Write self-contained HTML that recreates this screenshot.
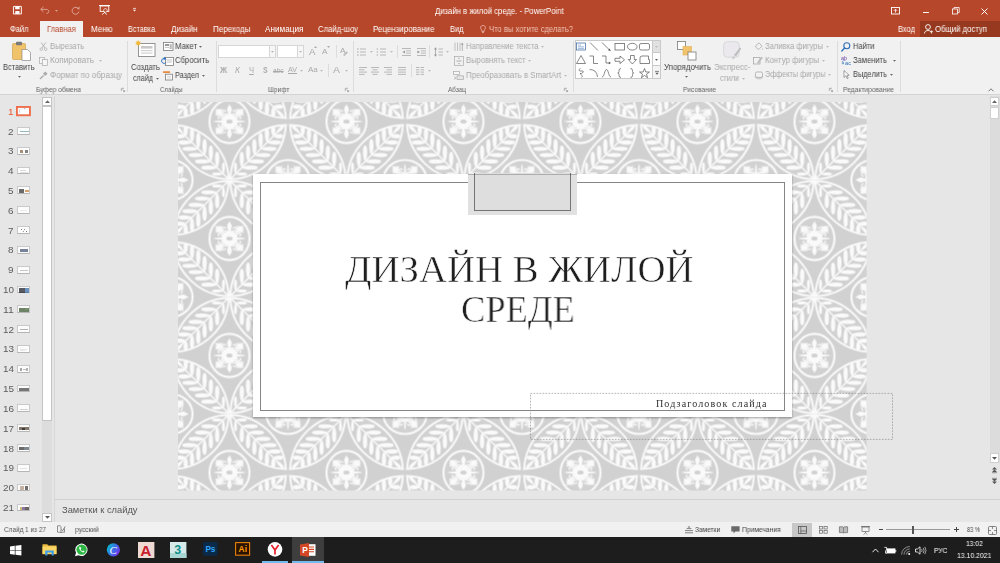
<!DOCTYPE html>
<html lang="ru"><head><meta charset="utf-8"><title>Дизайн в жилой среде. - PowerPoint</title>
<style>
html,body{margin:0;padding:0;}
body{width:1000px;height:563px;overflow:hidden;position:relative;background:#e6e6e6;font-family:"Liberation Sans",sans-serif;}
.a{position:absolute;box-sizing:border-box;}
.t{position:absolute;white-space:nowrap;transform-origin:0 50%;display:block;will-change:transform;}
svg{position:absolute;overflow:visible;}
</style></head>
<body>
<div class="a" style="left:0px;top:0px;width:1000px;height:37px;background:#b7472a;"></div>
<div class="a" style="left:0px;top:37px;width:1000px;height:58px;background:#f1f1f1;border-bottom:1px solid #d4d4d4;"></div>
<div class="a" style="left:40px;top:21px;width:43px;height:17px;background:#f1f1f1;"></div>
<div class="a" style="left:920px;top:21px;width:80px;height:16px;background:#96391f;"></div>
<svg style="left:178px;top:102px;overflow:hidden" width="688.6" height="388.5" viewBox="0 0 688.6 388.5"><defs><g id="lens"><path d="M0.908,-0.907 A56.50,57.60 0 0 0 56.402,-55.113 A57.60,55.15 0 0 0 0.908,-0.907Z" fill="none" stroke="#fafafa" stroke-width="2.0" stroke-linejoin="miter"/><g transform="rotate(-45)"><path d="M1.5,0 L68.7,0" stroke="#fafafa" stroke-width="1.5" fill="none"/>
<path d="M0,0 C1.05,-0.94 2.94,-1.70 6.51,-1.70 C9.24,-1.70 10.50,-1.05 10.50,0 C10.50,1.05 9.24,1.70 6.51,1.70 C2.94,1.70 1.05,0.94 0,0Z" transform="translate(66.13,0)" fill="#fafafa"/>
<path d="M0,0 C1.15,-0.83 3.21,-1.50 7.11,-1.50 C10.10,-1.50 11.47,-0.93 11.47,0 C11.47,0.93 10.10,1.50 7.11,1.50 C3.21,1.50 1.15,0.83 0,0Z" transform="translate(8.50,0) rotate(45)" fill="#fafafa"/>
<path d="M0,0 C1.15,-0.83 3.21,-1.50 7.11,-1.50 C10.10,-1.50 11.47,-0.93 11.47,0 C11.47,0.93 10.10,1.50 7.11,1.50 C3.21,1.50 1.15,0.83 0,0Z" transform="translate(8.50,0) rotate(-45)" fill="#fafafa"/>
<path d="M0,0 C1.60,-1.18 4.48,-2.15 9.92,-2.15 C14.08,-2.15 16.00,-1.33 16.00,0 C16.00,1.33 14.08,2.15 9.92,2.15 C4.48,2.15 1.60,1.18 0,0Z" transform="translate(17.40,0) rotate(45)" fill="#fafafa"/>
<path d="M0,0 C1.60,-1.18 4.48,-2.15 9.92,-2.15 C14.08,-2.15 16.00,-1.33 16.00,0 C16.00,1.33 14.08,2.15 9.92,2.15 C4.48,2.15 1.60,1.18 0,0Z" transform="translate(17.40,0) rotate(-45)" fill="#fafafa"/>
<path d="M0,0 C1.60,-1.18 4.48,-2.15 9.92,-2.15 C14.08,-2.15 16.00,-1.33 16.00,0 C16.00,1.33 14.08,2.15 9.92,2.15 C4.48,2.15 1.60,1.18 0,0Z" transform="translate(26.30,0) rotate(45)" fill="#fafafa"/>
<path d="M0,0 C1.60,-1.18 4.48,-2.15 9.92,-2.15 C14.08,-2.15 16.00,-1.33 16.00,0 C16.00,1.33 14.08,2.15 9.92,2.15 C4.48,2.15 1.60,1.18 0,0Z" transform="translate(26.30,0) rotate(-45)" fill="#fafafa"/>
<path d="M0,0 C1.60,-1.18 4.48,-2.15 9.92,-2.15 C14.08,-2.15 16.00,-1.33 16.00,0 C16.00,1.33 14.08,2.15 9.92,2.15 C4.48,2.15 1.60,1.18 0,0Z" transform="translate(35.20,0) rotate(45)" fill="#fafafa"/>
<path d="M0,0 C1.60,-1.18 4.48,-2.15 9.92,-2.15 C14.08,-2.15 16.00,-1.33 16.00,0 C16.00,1.33 14.08,2.15 9.92,2.15 C4.48,2.15 1.60,1.18 0,0Z" transform="translate(35.20,0) rotate(-45)" fill="#fafafa"/>
<path d="M0,0 C1.60,-1.18 4.48,-2.15 9.92,-2.15 C14.08,-2.15 16.00,-1.33 16.00,0 C16.00,1.33 14.08,2.15 9.92,2.15 C4.48,2.15 1.60,1.18 0,0Z" transform="translate(44.10,0) rotate(45)" fill="#fafafa"/>
<path d="M0,0 C1.60,-1.18 4.48,-2.15 9.92,-2.15 C14.08,-2.15 16.00,-1.33 16.00,0 C16.00,1.33 14.08,2.15 9.92,2.15 C4.48,2.15 1.60,1.18 0,0Z" transform="translate(44.10,0) rotate(-45)" fill="#fafafa"/>
<path d="M0,0 C1.40,-1.18 3.92,-2.15 8.68,-2.15 C12.32,-2.15 14.00,-1.33 14.00,0 C14.00,1.33 12.32,2.15 8.68,2.15 C3.92,2.15 1.40,1.18 0,0Z" transform="translate(53.00,0) rotate(45)" fill="#fafafa"/>
<path d="M0,0 C1.40,-1.18 3.92,-2.15 8.68,-2.15 C12.32,-2.15 14.00,-1.33 14.00,0 C14.00,1.33 12.32,2.15 8.68,2.15 C3.92,2.15 1.40,1.18 0,0Z" transform="translate(53.00,0) rotate(-45)" fill="#fafafa"/>
<path d="M0,0 C1.00,-1.18 2.80,-2.15 6.20,-2.15 C8.80,-2.15 10.00,-1.33 10.00,0 C10.00,1.33 8.80,2.15 6.20,2.15 C2.80,2.15 1.00,1.18 0,0Z" transform="translate(61.90,0) rotate(45)" fill="#fafafa"/>
<path d="M0,0 C1.00,-1.18 2.80,-2.15 6.20,-2.15 C8.80,-2.15 10.00,-1.33 10.00,0 C10.00,1.33 8.80,2.15 6.20,2.15 C2.80,2.15 1.00,1.18 0,0Z" transform="translate(61.90,0) rotate(-45)" fill="#fafafa"/></g></g><g id="med"><ellipse rx="20" ry="21.6" fill="none" stroke="#fafafa" stroke-width="2.1"/>
<path d="M-3,-7 L3,-7 L7,-3 L7,3 L3,7 L-3,7 L-7,3 L-7,-3Z" fill="#fafafa" stroke="#fafafa" stroke-width="0.8" stroke-linejoin="round"/>
<g transform="rotate(0)"><path d="M0,-17.6 C0.7,-15.4 2.4,-14 2.4,-12.4 C2.4,-10.6 1.2,-9.6 1.3,-6 L-1.3,-6 C-1.2,-9.6 -2.4,-10.6 -2.4,-12.4 C-2.4,-14 -0.7,-15.4 0,-17.6Z" fill="#fafafa"/><path d="M-2,-7 C-3.5,-7.2 -7.2,-7 -7,-9.6 C-6.8,-11.6 -4.2,-11.8 -3.7,-9.9 M2,-7 C3.5,-7.2 7.2,-7 7,-9.6 C6.8,-11.6 4.2,-11.8 3.7,-9.9" fill="none" stroke="#fafafa" stroke-width="1.25" stroke-linecap="round"/></g>
<g transform="rotate(180)"><path d="M0,-17.6 C0.7,-15.4 2.4,-14 2.4,-12.4 C2.4,-10.6 1.2,-9.6 1.3,-6 L-1.3,-6 C-1.2,-9.6 -2.4,-10.6 -2.4,-12.4 C-2.4,-14 -0.7,-15.4 0,-17.6Z" fill="#fafafa"/><path d="M-2,-7 C-3.5,-7.2 -7.2,-7 -7,-9.6 C-6.8,-11.6 -4.2,-11.8 -3.7,-9.9 M2,-7 C3.5,-7.2 7.2,-7 7,-9.6 C6.8,-11.6 4.2,-11.8 3.7,-9.9" fill="none" stroke="#fafafa" stroke-width="1.25" stroke-linecap="round"/></g>
<g transform="rotate(90)"><path d="M0,-16.6 L0.8,-13 L1.2,-6 L-1.2,-6 L-0.8,-13Z" fill="#fafafa"/><path d="M-1.6,-7 C-3,-7.4 -5.6,-7.6 -5.4,-10 C-5.2,-11.8 -3,-11.8 -2.7,-10.2 M1.6,-7 C3,-7.4 5.6,-7.6 5.4,-10 C5.2,-11.8 3,-11.8 2.7,-10.2" fill="none" stroke="#fafafa" stroke-width="1.2" stroke-linecap="round"/></g>
<g transform="rotate(270)"><path d="M0,-16.6 L0.8,-13 L1.2,-6 L-1.2,-6 L-0.8,-13Z" fill="#fafafa"/><path d="M-1.6,-7 C-3,-7.4 -5.6,-7.6 -5.4,-10 C-5.2,-11.8 -3,-11.8 -2.7,-10.2 M1.6,-7 C3,-7.4 5.6,-7.6 5.4,-10 C5.2,-11.8 3,-11.8 2.7,-10.2" fill="none" stroke="#fafafa" stroke-width="1.2" stroke-linecap="round"/></g>
<path d="M-5,-4.6 L-9,-8" stroke="#fafafa" stroke-width="2"/>
<path transform="translate(-10.5,-9.2)" d="M-3.2,-3.2 L-1.2,-2.5 L0,-3.3 L1.2,-2.5 L3.2,-3.2 L2.5,-1.2 L3.3,0 L2.5,1.2 L3.2,3.2 L1.2,2.5 L0,3.3 L-1.2,2.5 L-3.2,3.2 L-2.5,1.2 L-3.3,0 L-2.5,-1.2 Z" fill="#fafafa" stroke="#fafafa" stroke-width="0.6" stroke-linejoin="round"/>
<path d="M-5,4.6 L-9,8" stroke="#fafafa" stroke-width="2"/>
<path transform="translate(-10.5,9.2)" d="M-3.2,-3.2 L-1.2,-2.5 L0,-3.3 L1.2,-2.5 L3.2,-3.2 L2.5,-1.2 L3.3,0 L2.5,1.2 L3.2,3.2 L1.2,2.5 L0,3.3 L-1.2,2.5 L-3.2,3.2 L-2.5,1.2 L-3.3,0 L-2.5,-1.2 Z" fill="#fafafa" stroke="#fafafa" stroke-width="0.6" stroke-linejoin="round"/>
<path d="M5,-4.6 L9,-8" stroke="#fafafa" stroke-width="2"/>
<path transform="translate(10.5,-9.2)" d="M-3.2,-3.2 L-1.2,-2.5 L0,-3.3 L1.2,-2.5 L3.2,-3.2 L2.5,-1.2 L3.3,0 L2.5,1.2 L3.2,3.2 L1.2,2.5 L0,3.3 L-1.2,2.5 L-3.2,3.2 L-2.5,1.2 L-3.3,0 L-2.5,-1.2 Z" fill="#fafafa" stroke="#fafafa" stroke-width="0.6" stroke-linejoin="round"/>
<path d="M5,4.6 L9,8" stroke="#fafafa" stroke-width="2"/>
<path transform="translate(10.5,9.2)" d="M-3.2,-3.2 L-1.2,-2.5 L0,-3.3 L1.2,-2.5 L3.2,-3.2 L2.5,-1.2 L3.3,0 L2.5,1.2 L3.2,3.2 L1.2,2.5 L0,3.3 L-1.2,2.5 L-3.2,3.2 L-2.5,1.2 L-3.3,0 L-2.5,-1.2 Z" fill="#fafafa" stroke="#fafafa" stroke-width="0.6" stroke-linejoin="round"/>
<ellipse rx="3.1" ry="2.1" fill="#d1d1d1"/></g>
<pattern id="pat" x="51.5" y="19.5" width="117.0" height="117.0" patternUnits="userSpaceOnUse">
<rect width="117.0" height="117.0" fill="#d1d1d1"/>
<use href="#med" transform="translate(0,0)"/>
<use href="#med" transform="translate(117.0,0)"/>
<use href="#med" transform="translate(0,117.0)"/>
<use href="#med" transform="translate(117.0,117.0)"/>
<use href="#med" transform="translate(58.5,58.5) rotate(90)"/>
<use href="#lens" transform="translate(0,58.5) scale(1,1)"/>
<use href="#lens" transform="translate(0,58.5) scale(-1,1)"/>
<use href="#lens" transform="translate(0,58.5) scale(1,-1)"/>
<use href="#lens" transform="translate(0,58.5) scale(-1,-1)"/>
<use href="#lens" transform="translate(117.0,58.5) scale(1,1)"/>
<use href="#lens" transform="translate(117.0,58.5) scale(-1,1)"/>
<use href="#lens" transform="translate(117.0,58.5) scale(1,-1)"/>
<use href="#lens" transform="translate(117.0,58.5) scale(-1,-1)"/>
<use href="#lens" transform="translate(0,-58.5) scale(1,1)"/>
<use href="#lens" transform="translate(0,-58.5) scale(-1,1)"/>
<use href="#lens" transform="translate(0,-58.5) scale(1,-1)"/>
<use href="#lens" transform="translate(0,-58.5) scale(-1,-1)"/>
<use href="#lens" transform="translate(117.0,-58.5) scale(1,1)"/>
<use href="#lens" transform="translate(117.0,-58.5) scale(-1,1)"/>
<use href="#lens" transform="translate(117.0,-58.5) scale(1,-1)"/>
<use href="#lens" transform="translate(117.0,-58.5) scale(-1,-1)"/>
<use href="#lens" transform="translate(0,175.5) scale(1,1)"/>
<use href="#lens" transform="translate(0,175.5) scale(-1,1)"/>
<use href="#lens" transform="translate(0,175.5) scale(1,-1)"/>
<use href="#lens" transform="translate(0,175.5) scale(-1,-1)"/>
<use href="#lens" transform="translate(117.0,175.5) scale(1,1)"/>
<use href="#lens" transform="translate(117.0,175.5) scale(-1,1)"/>
<use href="#lens" transform="translate(117.0,175.5) scale(1,-1)"/>
<use href="#lens" transform="translate(117.0,175.5) scale(-1,-1)"/>
</pattern></defs><rect width="688.6" height="388.5" fill="url(#pat)"/></svg>
<div class="a" style="left:253px;top:174px;width:539px;height:243px;background:#fff;box-shadow:0 0.5px 2px rgba(0,0,0,0.35);"></div>
<div class="a" style="left:260px;top:182px;width:525px;height:229px;border:1px solid #858585;"></div>
<div class="a" style="left:468px;top:174px;width:109px;height:41px;background:#e1e1e1;"></div>
<div class="a" style="left:474px;top:173px;width:97px;height:38px;background:#dedede;border:1px solid #757575;border-top:none;"></div>
<div class="a" style="left:468px;top:174px;width:109px;height:1px;background:rgba(0,0,0,0.22);"></div>
<svg style="left:530px;top:393px" width="363" height="47" viewBox="0 0 363 47"><rect x="0.5" y="0.4" width="362" height="46" fill="none" stroke="#858585" stroke-width="0.6" stroke-dasharray="1.7 1.3"/></svg>
<div class="a" style="left:54px;top:96px;width:1px;height:425.5px;background:#d6d6d6;"></div>
<div class="a" style="left:42.3px;top:97px;width:9.6px;height:9.3px;background:#fff;border:0.8px solid #c4c4c4;"></div>
<div class="a" style="left:42.3px;top:106.3px;width:9.4px;height:314.6px;background:#fff;border:0.8px solid #c4c4c4;"></div>
<div class="a" style="left:42.3px;top:420.9px;width:9.4px;height:91.8px;background:#dddddd;"></div>
<div class="a" style="left:42.3px;top:512.5px;width:9.6px;height:9px;background:#fff;border:0.8px solid #c4c4c4;"></div>
<svg style="left:16px;top:106.00px" width="14.9" height="10.2" viewBox="0 0 14.9 10.2"><rect x="0.95" y="0.95" width="13" height="8.3" fill="#fff" stroke="#ef6f4c" stroke-width="1.9"/><path d="M3.6,3.2 V6.8" stroke="#b5b5b5" stroke-width="0.6"/><path d="M4.2,2.9 H10.5" stroke="#d8d8d8" stroke-width="0.5"/><rect x="8" y="2.4" width="1.2" height="0.7" fill="#999"/></svg>
<div class="a" style="left:17.3px;top:127.01499999999999px;width:12.3px;height:7.8px;background:#fcfcfc;border:0.7px solid #c9c9c9;border-bottom-color:#b5b5b5;"><div class="a" style="left:1.5px;top:3px;width:9px;height:0.9px;background:#6fa3a8;opacity:0.75"></div></div>
<div class="a" style="left:17.3px;top:146.82999999999998px;width:12.3px;height:7.8px;background:#fcfcfc;border:0.7px solid #c9c9c9;border-bottom-color:#b5b5b5;"><div class="a" style="left:2.2px;top:2.2px;width:3px;height:3.2px;background:#8a6a4a;opacity:0.75"></div><div class="a" style="left:6.6px;top:2.2px;width:3.2px;height:3.2px;background:#5a5a5a;opacity:0.75"></div></div>
<div class="a" style="left:17.3px;top:166.645px;width:12.3px;height:7.8px;background:#fcfcfc;border:0.7px solid #c9c9c9;border-bottom-color:#b5b5b5;"><div class="a" style="left:1.5px;top:2.2px;width:6px;height:0.6px;background:#cfcfcf;opacity:0.75"></div><div class="a" style="left:1.5px;top:4px;width:8px;height:0.6px;background:#d8d8d8;opacity:0.75"></div></div>
<div class="a" style="left:17.3px;top:186.46px;width:12.3px;height:7.8px;background:#fcfcfc;border:0.7px solid #c9c9c9;border-bottom-color:#b5b5b5;"><div class="a" style="left:1.2px;top:2px;width:5px;height:3.2px;background:#3a3a3a;opacity:0.75"></div><div class="a" style="left:6.4px;top:2.4px;width:4.2px;height:2.6px;background:#c9853a;opacity:0.75"></div></div>
<div class="a" style="left:17.3px;top:206.275px;width:12.3px;height:7.8px;background:#fcfcfc;border:0.7px solid #c9c9c9;border-bottom-color:#b5b5b5;"><div class="a" style="left:2px;top:3px;width:7px;height:0.6px;background:#e4e4e4;opacity:0.75"></div></div>
<div class="a" style="left:17.3px;top:226.09px;width:12.3px;height:7.8px;background:#fcfcfc;border:0.7px solid #c9c9c9;border-bottom-color:#b5b5b5;"><div class="a" style="left:3px;top:2px;width:1px;height:1px;background:#555;opacity:0.75"></div><div class="a" style="left:6px;top:2.4px;width:1px;height:1px;background:#666;opacity:0.75"></div><div class="a" style="left:7.6px;top:4px;width:1px;height:1px;background:#555;opacity:0.75"></div><div class="a" style="left:4.5px;top:4.4px;width:1px;height:1px;background:#777;opacity:0.75"></div></div>
<div class="a" style="left:17.3px;top:245.905px;width:12.3px;height:7.8px;background:#fcfcfc;border:0.7px solid #c9c9c9;border-bottom-color:#b5b5b5;"><div class="a" style="left:1.5px;top:2.6px;width:8.6px;height:2.4px;background:#4a5a7a;opacity:0.75"></div></div>
<div class="a" style="left:17.3px;top:265.72px;width:12.3px;height:7.8px;background:#fcfcfc;border:0.7px solid #c9c9c9;border-bottom-color:#b5b5b5;"><div class="a" style="left:2px;top:3.2px;width:8px;height:0.7px;background:#b5b5b5;opacity:0.75"></div></div>
<div class="a" style="left:17.3px;top:285.535px;width:12.3px;height:7.8px;background:#fcfcfc;border:0.7px solid #c9c9c9;border-bottom-color:#b5b5b5;"><div class="a" style="left:1px;top:1.4px;width:5.4px;height:4.6px;background:#20242c;opacity:0.75"></div><div class="a" style="left:6.4px;top:1.4px;width:4.4px;height:4.6px;background:#3a6ea5;opacity:0.75"></div></div>
<div class="a" style="left:17.3px;top:305.35px;width:12.3px;height:7.8px;background:#fcfcfc;border:0.7px solid #c9c9c9;border-bottom-color:#b5b5b5;"><div class="a" style="left:1px;top:1.4px;width:9.8px;height:4.6px;background:#3f5a35;opacity:0.75"></div><div class="a" style="left:7px;top:2px;width:3px;height:2px;background:#7a9a6a;opacity:0.75"></div></div>
<div class="a" style="left:17.3px;top:325.165px;width:12.3px;height:7.8px;background:#fcfcfc;border:0.7px solid #c9c9c9;border-bottom-color:#b5b5b5;"><div class="a" style="left:1.6px;top:3px;width:8.6px;height:0.8px;background:#9a9a9a;opacity:0.75"></div></div>
<div class="a" style="left:17.3px;top:344.98px;width:12.3px;height:7.8px;background:#fcfcfc;border:0.7px solid #c9c9c9;border-bottom-color:#b5b5b5;"><div class="a" style="left:2px;top:2.6px;width:7px;height:0.6px;background:#dedede;opacity:0.75"></div><div class="a" style="left:2px;top:4.2px;width:5px;height:0.6px;background:#e4e4e4;opacity:0.75"></div></div>
<div class="a" style="left:17.3px;top:364.7950000000001px;width:12.3px;height:7.8px;background:#fcfcfc;border:0.7px solid #c9c9c9;border-bottom-color:#b5b5b5;"><div class="a" style="left:2px;top:2.4px;width:1.4px;height:2.4px;background:#8a8a8a;opacity:0.75"></div><div class="a" style="left:4.4px;top:2.8px;width:3px;height:1.6px;background:#aaa;opacity:0.75"></div><div class="a" style="left:8px;top:2.4px;width:1.4px;height:2.4px;background:#999;opacity:0.75"></div></div>
<div class="a" style="left:17.3px;top:384.61px;width:12.3px;height:7.8px;background:#fcfcfc;border:0.7px solid #c9c9c9;border-bottom-color:#b5b5b5;"><div class="a" style="left:1.2px;top:2.2px;width:9.4px;height:3px;background:#4a4a4a;opacity:0.75"></div></div>
<div class="a" style="left:17.3px;top:404.42500000000007px;width:12.3px;height:7.8px;background:#fcfcfc;border:0.7px solid #c9c9c9;border-bottom-color:#b5b5b5;"><div class="a" style="left:2px;top:3.2px;width:7.6px;height:0.7px;background:#c4c4c4;opacity:0.75"></div></div>
<div class="a" style="left:17.3px;top:424.24px;width:12.3px;height:7.8px;background:#fcfcfc;border:0.7px solid #c9c9c9;border-bottom-color:#b5b5b5;"><div class="a" style="left:1.2px;top:2px;width:9.4px;height:3.2px;background:#5a4a3a;opacity:0.75"></div><div class="a" style="left:4px;top:2.4px;width:3px;height:2px;background:#2a2a2a;opacity:0.75"></div></div>
<div class="a" style="left:17.3px;top:444.05500000000006px;width:12.3px;height:7.8px;background:#fcfcfc;border:0.7px solid #c9c9c9;border-bottom-color:#b5b5b5;"><div class="a" style="left:1.2px;top:2.2px;width:4.4px;height:3px;background:#3a3a3a;opacity:0.75"></div><div class="a" style="left:6px;top:2.2px;width:4.6px;height:3px;background:#55606a;opacity:0.75"></div></div>
<div class="a" style="left:17.3px;top:463.87px;width:12.3px;height:7.8px;background:#fcfcfc;border:0.7px solid #c9c9c9;border-bottom-color:#b5b5b5;"><div class="a" style="left:2px;top:2.8px;width:7px;height:0.6px;background:#dcdcdc;opacity:0.75"></div></div>
<div class="a" style="left:17.3px;top:483.68500000000006px;width:12.3px;height:7.8px;background:#fcfcfc;border:0.7px solid #c9c9c9;border-bottom-color:#b5b5b5;"><div class="a" style="left:1.6px;top:1.8px;width:3.8px;height:3.6px;background:#b59a84;opacity:0.75"></div><div class="a" style="left:6.4px;top:1.8px;width:3.8px;height:3.6px;background:#4a4038;opacity:0.75"></div></div>
<div class="a" style="left:17.3px;top:503.5px;width:12.3px;height:7.8px;background:#fcfcfc;border:0.7px solid #c9c9c9;border-bottom-color:#b5b5b5;"><div class="a" style="left:1.4px;top:2px;width:2.6px;height:3.2px;background:#b9a24a;opacity:0.75"></div><div class="a" style="left:4px;top:2px;width:3px;height:3.2px;background:#6a4a8a;opacity:0.75"></div><div class="a" style="left:7px;top:2px;width:3.6px;height:3.2px;background:#3a3030;opacity:0.75"></div></div>
<div class="a" style="left:55px;top:499px;width:945px;height:1px;background:#d0d0d0;"></div>
<div class="a" style="left:0px;top:522.3px;width:1000px;height:15px;background:#f1f1f1;"></div>
<div class="a" style="left:0px;top:537.3px;width:1000px;height:25.7px;background:#1d1d1d;"></div>
<svg style="left:12px;top:41px" width="19" height="20" viewBox="0 0 19 20"><rect x="0.5" y="2.5" width="13" height="16" rx="1" fill="#f0c26a" stroke="#c99b3f" stroke-width="0.6"/>
<rect x="4" y="0.8" width="6" height="3.4" rx="0.8" fill="#7a7a7a"/>
<path d="M10,8.5 L15.5,8.5 L18.5,11.5 L18.5,19.5 L10,19.5Z" fill="#fff" stroke="#8a8a8a" stroke-width="0.7"/></svg>
<svg style="left:17.5px;top:76px" width="3" height="2" viewBox="0 0 3 2"><path d="M0,0 L3,0 L1.5,1.8Z" fill="#666"/></svg>
<svg style="left:39px;top:42px" width="9" height="9" viewBox="0 0 9 9"><path d="M2.2,0.5 L6,6 M6.8,0.5 L3,6" stroke="#aaa" stroke-width="0.8"/><circle cx="2.3" cy="7.2" r="1.3" fill="none" stroke="#aaa" stroke-width="0.7"/><circle cx="6.7" cy="7.2" r="1.3" fill="none" stroke="#aaa" stroke-width="0.7"/></svg>
<svg style="left:39px;top:56.5px" width="9" height="9" viewBox="0 0 9 9"><rect x="0.5" y="0.5" width="5" height="6" fill="#f7f7f7" stroke="#aaa" stroke-width="0.7"/><rect x="3.3" y="2.5" width="5" height="6" fill="#f7f7f7" stroke="#aaa" stroke-width="0.7"/></svg>
<svg style="left:98.5px;top:60px" width="3" height="2" viewBox="0 0 3 2"><path d="M0,0 L3,0 L1.5,1.8Z" fill="#bbb"/></svg>
<svg style="left:39px;top:70.5px" width="9" height="9" viewBox="0 0 9 9"><path d="M1,8 L4.5,4.5" stroke="#b0b0b0" stroke-width="1.6"/><path d="M4,2.5 L6.5,0.5 L8.5,2.8 L6,5Z" fill="#aaa"/></svg>
<svg style="left:120.5px;top:87.5px" width="4" height="4" viewBox="0 0 4 4"><path d="M0.3,3 L0.3,0.3 L3,0.3 M1.5,1.5 L3.6,3.6 M3.6,2 L3.6,3.6 L2,3.6" stroke="#888" stroke-width="0.6" fill="none"/></svg>
<div class="a" style="left:127px;top:41px;width:1px;height:51px;background:#dcdcdc;"></div>
<svg style="left:135px;top:40px" width="21" height="18" viewBox="0 0 21 18"><rect x="3.5" y="3.5" width="16.5" height="13" fill="#fff" stroke="#7c7c7c" stroke-width="0.8"/>
<rect x="6" y="6" width="11.5" height="2.6" fill="#c9c9c9"/><rect x="6" y="10.2" width="11.5" height="1" fill="#c9c9c9"/><rect x="6" y="12.6" width="11.5" height="1" fill="#c9c9c9"/>
<circle cx="3.2" cy="3.2" r="1.9" fill="#f2b632"/><path d="M3.2,0 V6.4 M0,3.2 H6.4 M1,1 L5.4,5.4 M5.4,1 L1,5.4" stroke="#f2b632" stroke-width="0.5"/></svg>
<svg style="left:155.5px;top:77.5px" width="3" height="2" viewBox="0 0 3 2"><path d="M0,0 L3,0 L1.5,1.8Z" fill="#666"/></svg>
<svg style="left:163px;top:42px" width="10.5" height="9" viewBox="0 0 10.5 9"><rect x="0.5" y="0.5" width="9.5" height="8" fill="#fff" stroke="#7c7c7c" stroke-width="0.8"/><rect x="2" y="2" width="4" height="2" fill="#999"/><rect x="6.6" y="2" width="2.2" height="5" fill="#bbb"/><rect x="2" y="5" width="4" height="0.8" fill="#bbb"/></svg>
<svg style="left:199.0px;top:45.5px" width="3" height="2" viewBox="0 0 3 2"><path d="M0,0 L3,0 L1.5,1.8Z" fill="#666"/></svg>
<svg style="left:161.5px;top:56px" width="12" height="10" viewBox="0 0 12 10"><rect x="3.5" y="1.5" width="8" height="8" fill="#fff" stroke="#7c7c7c" stroke-width="0.8"/><path d="M5,4 H10 M5,6 H10" stroke="#aaa" stroke-width="0.7"/><path d="M3.8,2.8 A2.6,2.6 0 1 0 4.2,6.5" fill="none" stroke="#2f74c0" stroke-width="1"/><path d="M2.2,0.8 L4.6,3.4 L1.4,3.8Z" fill="#2f74c0"/></svg>
<svg style="left:163px;top:70.5px" width="11.5" height="9.5" viewBox="0 0 11.5 9.5"><rect x="0" y="0.3" width="7" height="1.6" fill="#e8812d"/><rect x="2.5" y="3.2" width="7" height="5.8" fill="#fff" stroke="#7c7c7c" stroke-width="0.8"/><path d="M4,5.2 H8 M4,7 H8" stroke="#bbb" stroke-width="0.6"/></svg>
<svg style="left:201.5px;top:74.5px" width="3" height="2" viewBox="0 0 3 2"><path d="M0,0 L3,0 L1.5,1.8Z" fill="#666"/></svg>
<div class="a" style="left:215.5px;top:41px;width:1px;height:51px;background:#dcdcdc;"></div>
<div class="a" style="left:217.5px;top:44.5px;width:52.5px;height:13.5px;background:#fff;border:1px solid #d6d6d6;"></div>
<div class="a" style="left:270px;top:44.5px;width:5.5px;height:13.5px;background:#f6f6f6;border:1px solid #d6d6d6;border-left:none;"></div>
<svg style="left:271.1px;top:50.5px" width="3" height="2" viewBox="0 0 3 2"><path d="M0,0 L3,0 L1.5,1.8Z" fill="#b5b5b5"/></svg>
<div class="a" style="left:277px;top:44.5px;width:20.5px;height:13.5px;background:#fff;border:1px solid #d6d6d6;"></div>
<div class="a" style="left:297.5px;top:44.5px;width:6px;height:13.5px;background:#f6f6f6;border:1px solid #d6d6d6;border-left:none;"></div>
<svg style="left:298.9px;top:50.5px" width="3" height="2" viewBox="0 0 3 2"><path d="M0,0 L3,0 L1.5,1.8Z" fill="#b5b5b5"/></svg>
<svg style="left:314px;top:46px" width="3" height="2" viewBox="0 0 3 2"><path d="M0,2 L1.5,0 L3,2Z" fill="#aaa"/></svg>
<svg style="left:327px;top:46px" width="3" height="2" viewBox="0 0 3 2"><path d="M0,0 L1.5,2 L3,0Z" fill="#aaa"/></svg>
<div class="a" style="left:335.5px;top:45px;width:1px;height:13px;background:#dcdcdc;"></div>
<svg style="left:342px;top:50px" width="6.5" height="6" viewBox="0 0 6.5 6"><path d="M1,5 L4.5,1.2 L6,2.6 L2.5,6Z" fill="#bdbdbd"/></svg>
<svg style="left:299.5px;top:70px" width="3" height="2" viewBox="0 0 3 2"><path d="M0,0 L3,0 L1.5,1.8Z" fill="#bbb"/></svg>
<svg style="left:319.5px;top:70px" width="3" height="2" viewBox="0 0 3 2"><path d="M0,0 L3,0 L1.5,1.8Z" fill="#bbb"/></svg>
<div class="a" style="left:327.5px;top:64px;width:1px;height:13px;background:#dcdcdc;"></div>
<svg style="left:344.5px;top:70px" width="3" height="2" viewBox="0 0 3 2"><path d="M0,0 L3,0 L1.5,1.8Z" fill="#bbb"/></svg>
<svg style="left:345px;top:87.5px" width="4" height="4" viewBox="0 0 4 4"><path d="M0.3,3 L0.3,0.3 L3,0.3 M1.5,1.5 L3.6,3.6 M3.6,2 L3.6,3.6 L2,3.6" stroke="#888" stroke-width="0.6" fill="none"/></svg>
<div class="a" style="left:352.5px;top:41px;width:1px;height:51px;background:#dcdcdc;"></div>
<svg style="left:357px;top:47.5px" width="9" height="8" viewBox="0 0 9 8"><circle cx="0.9" cy="1" r="0.8" fill="#aaa"/><circle cx="0.9" cy="4" r="0.8" fill="#aaa"/><circle cx="0.9" cy="7" r="0.8" fill="#aaa"/><path d="M3,1 H9 M3,4 H9 M3,7 H9" stroke="#aaa" stroke-width="0.8"/></svg>
<svg style="left:369.5px;top:50.5px" width="3" height="2" viewBox="0 0 3 2"><path d="M0,0 L3,0 L1.5,1.8Z" fill="#bbb"/></svg>
<svg style="left:377px;top:47.5px" width="9" height="8" viewBox="0 0 9 8"><path d="M0.3,0.2 V1.8 M0.3,3.2 V4.8 M0.3,6.2 V7.8" stroke="#999" stroke-width="0.7"/><path d="M3,1 H9 M3,4 H9 M3,7 H9" stroke="#aaa" stroke-width="0.8"/></svg>
<svg style="left:389.5px;top:50.5px" width="3" height="2" viewBox="0 0 3 2"><path d="M0,0 L3,0 L1.5,1.8Z" fill="#bbb"/></svg>
<div class="a" style="left:397.3px;top:45px;width:1px;height:13px;background:#dcdcdc;"></div>
<svg style="left:402px;top:47.5px" width="9" height="8" viewBox="0 0 9 8"><path d="M0,0.5 H9 M4,2.8 H9 M4,5.1 H9 M0,7.5 H9" stroke="#aaa" stroke-width="0.8"/><path d="M3,2.4 L0.4,4 L3,5.6Z" fill="#999"/></svg>
<svg style="left:416.5px;top:47.5px" width="9" height="8" viewBox="0 0 9 8"><path d="M0,0.5 H9 M4,2.8 H9 M4,5.1 H9 M0,7.5 H9" stroke="#aaa" stroke-width="0.8"/><path d="M0.4,2.4 L3,4 L0.4,5.6Z" fill="#999"/></svg>
<div class="a" style="left:429.3px;top:45px;width:1px;height:13px;background:#dcdcdc;"></div>
<svg style="left:433.5px;top:46.5px" width="9" height="10" viewBox="0 0 9 10"><path d="M1.5,1 V9" stroke="#999" stroke-width="0.7"/><path d="M0,2.5 L1.5,0.3 L3,2.5Z M0,7.5 L1.5,9.7 L3,7.5Z" fill="#999"/><path d="M4.5,2 H9 M4.5,5 H9 M4.5,8 H9" stroke="#aaa" stroke-width="0.8"/></svg>
<svg style="left:446.0px;top:50.5px" width="3" height="2" viewBox="0 0 3 2"><path d="M0,0 L3,0 L1.5,1.8Z" fill="#bbb"/></svg>
<svg style="left:358.5px;top:66.5px" width="8" height="8" viewBox="0 0 8 8"><path d="M0,0.5 H8 M0,2.8 H5.5 M0,5.1 H8 M0,7.4 H5.5" stroke="#aaa" stroke-width="0.8"/></svg>
<svg style="left:371px;top:66.5px" width="8" height="8" viewBox="0 0 8 8"><path d="M0,0.5 H8 M1.4,2.8 H6.6 M0,5.1 H8 M1.4,7.4 H6.6" stroke="#aaa" stroke-width="0.8"/></svg>
<svg style="left:384px;top:66.5px" width="8" height="8" viewBox="0 0 8 8"><path d="M0,0.5 H8 M2.5,2.8 H8 M0,5.1 H8 M2.5,7.4 H8" stroke="#aaa" stroke-width="0.8"/></svg>
<svg style="left:397.5px;top:66.5px" width="8" height="8" viewBox="0 0 8 8"><path d="M0,0.5 H8 M0,2.8 H8 M0,5.1 H8 M0,7.4 H8" stroke="#aaa" stroke-width="0.8"/></svg>
<div class="a" style="left:411px;top:64px;width:1px;height:13px;background:#dcdcdc;"></div>
<svg style="left:416px;top:66.5px" width="8" height="8" viewBox="0 0 8 8"><path d="M0,0.5 H3.4 M0,2.8 H3.4 M0,5.1 H3.4 M0,7.4 H3.4 M4.6,0.5 H8 M4.6,2.8 H8 M4.6,5.1 H8 M4.6,7.4 H8" stroke="#aaa" stroke-width="0.8"/></svg>
<svg style="left:427.5px;top:70px" width="3" height="2" viewBox="0 0 3 2"><path d="M0,0 L3,0 L1.5,1.8Z" fill="#bbb"/></svg>
<svg style="left:453.5px;top:41.5px" width="10" height="10" viewBox="0 0 10 10"><path d="M1,0.5 V9 M3.5,0.5 V9 M6,0.5 V9" stroke="#aaa" stroke-width="0.7"/><path d="M8.3,9 V2" stroke="#999" stroke-width="0.7"/><path d="M7,2.8 L8.3,0.6 L9.6,2.8Z" fill="#999"/></svg>
<svg style="left:540.5px;top:46px" width="3" height="2" viewBox="0 0 3 2"><path d="M0,0 L3,0 L1.5,1.8Z" fill="#bbb"/></svg>
<svg style="left:453.5px;top:56px" width="10" height="10" viewBox="0 0 10 10"><rect x="0.5" y="0.5" width="9" height="9" fill="none" stroke="#aaa" stroke-width="0.7"/><path d="M2.5,5 H7.5" stroke="#999" stroke-width="0.8"/><path d="M4,2.8 L5,1.4 L6,2.8Z M4,7.2 L5,8.6 L6,7.2Z" fill="#999"/></svg>
<svg style="left:527.5px;top:60.3px" width="3" height="2" viewBox="0 0 3 2"><path d="M0,0 L3,0 L1.5,1.8Z" fill="#bbb"/></svg>
<svg style="left:453px;top:70.5px" width="11" height="9" viewBox="0 0 11 9"><rect x="0.5" y="0.5" width="6" height="3" fill="#f7f7f7" stroke="#aaa" stroke-width="0.7"/><rect x="4" y="4.8" width="6.5" height="3.6" fill="#e6e6e6" stroke="#aaa" stroke-width="0.7"/><path d="M1,5.5 L3,7 L1,8.5" fill="none" stroke="#aaa" stroke-width="0.7"/></svg>
<svg style="left:563.5px;top:74.5px" width="3" height="2" viewBox="0 0 3 2"><path d="M0,0 L3,0 L1.5,1.8Z" fill="#bbb"/></svg>
<svg style="left:564px;top:87.5px" width="4" height="4" viewBox="0 0 4 4"><path d="M0.3,3 L0.3,0.3 L3,0.3 M1.5,1.5 L3.6,3.6 M3.6,2 L3.6,3.6 L2,3.6" stroke="#888" stroke-width="0.6" fill="none"/></svg>
<div class="a" style="left:572.5px;top:41px;width:1px;height:51px;background:#dcdcdc;"></div>
<div class="a" style="left:575px;top:40px;width:85.5px;height:39px;background:#fff;border:1px solid #c9c9c9;"></div>
<div class="a" style="left:652px;top:40px;width:8.5px;height:39px;background:#f4f4f4;border:1px solid #c9c9c9;"></div>
<div class="a" style="left:652px;top:40px;width:8.5px;height:13px;background:#e1e1e1;border:1px solid #c9c9c9;"></div>
<div class="a" style="left:652px;top:52px;width:8.5px;height:14px;background:#fdfdfd;border:1px solid #c9c9c9;"></div>
<svg style="left:654.8px;top:45.5px" width="3" height="2" viewBox="0 0 3 2"><path d="M0,0 L3,0 L1.5,1.8Z" fill="#bbb"/></svg>
<svg style="left:654.8px;top:58.5px" width="3" height="2" viewBox="0 0 3 2"><path d="M0,0 L3,0 L1.5,1.8Z" fill="#555"/></svg>
<svg style="left:654.5px;top:70.5px" width="4" height="4" viewBox="0 0 4 4"><path d="M0,0.4 H4" stroke="#555" stroke-width="0.7"/><path d="M0.3,1.8 L3.7,1.8 L2,3.8Z" fill="#555"/></svg>
<svg style="left:575px;top:40px" width="77" height="39" viewBox="0 0 77 39">
<rect x="1.5" y="3" width="9" height="7" fill="#fff" stroke="#2f5f9e" stroke-width="0.7"/><path d="M3,5 H6 M3,6.8 H9 M3,8.4 H9" stroke="#5b8ac6" stroke-width="0.6"/>
<path d="M15,2.5 L23,10.5" stroke="#555" stroke-width="0.7" fill="none"/>
<path d="M27,2.5 L35,10.5" stroke="#555" stroke-width="0.7" fill="none"/><path d="M35.6,11 L33,10.2 L34.8,8.4Z" fill="#555"/>
<rect x="40" y="3.5" width="9.5" height="6.5" stroke="#555" stroke-width="0.7" fill="none"/>
<ellipse cx="57.3" cy="6.7" rx="4.8" ry="3.4" stroke="#555" stroke-width="0.7" fill="none"/>
<rect x="64.5" y="3.5" width="10" height="6.5" rx="1.6" stroke="#555" stroke-width="0.7" fill="none"/>
<path d="M6,15.5 L10.5,23.5 L1.5,23.5Z" stroke="#555" stroke-width="0.7" fill="none"/>
<path d="M14.5,16 H18.5 V23.5 H23" stroke="#555" stroke-width="0.7" fill="none"/>
<path d="M27,16 H31 V23 H35" stroke="#555" stroke-width="0.7" fill="none"/><path d="M36,23 L33.8,21.8 L33.8,24.2Z" fill="#555"/>
<path d="M40,18.3 H45 V16 L49.5,19.8 L45,23.6 V21.3 H40Z" stroke="#555" stroke-width="0.7" fill="none"/>
<path d="M55.5,15.5 H59.3 V19.5 H61.5 L57.4,24 L53.3,19.5 H55.5Z" stroke="#555" stroke-width="0.7" fill="none"/>
<path d="M65,23.5 V18 Q65,16 67,16 H73.5 V19.5 H74.5 V23.5Z" stroke="#555" stroke-width="0.7" fill="none"/>
<path d="M5.5,28.5 C2.5,30 4.5,31.5 7,31 C9.5,30.5 8,34 5,33.5 C7,35 8,36.5 6.5,37.5" stroke="#555" stroke-width="0.7" fill="none"/>
<path d="M14.5,29.5 Q22,29.5 22.5,37" stroke="#555" stroke-width="0.7" fill="none"/>
<path d="M27,37 C29.5,37 29.5,29.5 31.5,29.5 C33.5,29.5 33.5,37 36,37" stroke="#555" stroke-width="0.7" fill="none"/>
<path d="M46,28.5 Q44,28.5 44,30.5 V31.5 Q44,33 42.8,33 Q44,33 44,34.5 V35.5 Q44,37.5 46,37.5" stroke="#555" stroke-width="0.7" fill="none"/>
<path d="M55.5,28.5 Q57.5,28.5 57.5,30.5 V31.5 Q57.5,33 58.7,33 Q57.5,33 57.5,34.5 V35.5 Q57.5,37.5 55.5,37.5" stroke="#555" stroke-width="0.7" fill="none"/>
<path d="M69.5,28.5 L70.8,32 L74.5,32 L71.5,34.2 L72.6,37.7 L69.5,35.5 L66.4,37.7 L67.5,34.2 L64.5,32 L68.2,32Z" stroke="#555" stroke-width="0.7" fill="none"/>
</svg>
<svg style="left:677px;top:41px" width="20" height="20" viewBox="0 0 20 20"><rect x="0.5" y="0.5" width="8" height="8" fill="#fff" stroke="#7c7c7c" stroke-width="0.8"/>
<rect x="6" y="5.5" width="8.5" height="8.5" fill="#f1c36d" stroke="#e0a943" stroke-width="0.5"/>
<rect x="11" y="11" width="8" height="8" fill="#fff" stroke="#7c7c7c" stroke-width="0.8"/></svg>
<svg style="left:685.0px;top:76px" width="3" height="2" viewBox="0 0 3 2"><path d="M0,0 L3,0 L1.5,1.8Z" fill="#666"/></svg>
<svg style="left:723px;top:41px" width="19" height="20" viewBox="0 0 19 20"><rect x="0.7" y="0.7" width="15.5" height="15.5" rx="3.5" fill="#ece9ee" stroke="#d2d0d4" stroke-width="0.8"/>
<path d="M11,14 L17,6.5 L18.3,7.6 L13,15.5Z" fill="#bdbdbd"/><path d="M10,15 L12.4,16.8 L9.2,18.6Z" fill="#c6c6c6"/></svg>
<svg style="left:742.0px;top:77.5px" width="3" height="2" viewBox="0 0 3 2"><path d="M0,0 L3,0 L1.5,1.8Z" fill="#bbb"/></svg>
<svg style="left:754px;top:42px" width="9" height="9" viewBox="0 0 9 9"><path d="M2,3.5 L5,0.8 L8,4.2 L4.6,7.6 L1.5,5Z" fill="none" stroke="#aaa" stroke-width="0.8"/><path d="M8.3,6 Q9,7.5 8.3,8.3 Q7.6,7.5 8.3,6Z" fill="#aaa"/></svg>
<svg style="left:825.5px;top:46px" width="3" height="2" viewBox="0 0 3 2"><path d="M0,0 L3,0 L1.5,1.8Z" fill="#bbb"/></svg>
<svg style="left:753px;top:56px" width="10" height="9" viewBox="0 0 10 9"><rect x="0.5" y="1.5" width="6.5" height="6.5" fill="none" stroke="#aaa" stroke-width="0.8"/><path d="M4,6.5 L8.8,0.8 L9.8,1.8 L5.2,7.5Z" fill="#b5b5b5"/></svg>
<svg style="left:821.5px;top:60.3px" width="3" height="2" viewBox="0 0 3 2"><path d="M0,0 L3,0 L1.5,1.8Z" fill="#bbb"/></svg>
<svg style="left:753.5px;top:70.5px" width="10" height="9" viewBox="0 0 10 9"><ellipse cx="5" cy="5.6" rx="4.2" ry="2.8" fill="#d0d0d0"/><rect x="1.5" y="1" width="7" height="5.4" rx="1.4" fill="#f3f3f3" stroke="#aaa" stroke-width="0.8"/></svg>
<svg style="left:828.0px;top:74.3px" width="3" height="2" viewBox="0 0 3 2"><path d="M0,0 L3,0 L1.5,1.8Z" fill="#bbb"/></svg>
<svg style="left:829px;top:87.5px" width="4" height="4" viewBox="0 0 4 4"><path d="M0.3,3 L0.3,0.3 L3,0.3 M1.5,1.5 L3.6,3.6 M3.6,2 L3.6,3.6 L2,3.6" stroke="#888" stroke-width="0.6" fill="none"/></svg>
<div class="a" style="left:837px;top:41px;width:1px;height:51px;background:#dcdcdc;"></div>
<svg style="left:841px;top:41.5px" width="10" height="10" viewBox="0 0 10 10"><circle cx="5.8" cy="3.8" r="3" fill="none" stroke="#2f6fb7" stroke-width="1.1"/><path d="M3.6,6 L0.8,9" stroke="#2f6fb7" stroke-width="1.3" stroke-linecap="round"/></svg>
<svg style="left:840.5px;top:59.5px" width="5" height="4" viewBox="0 0 5 4"><path d="M4.5,0.5 C1,0.3 0.6,2 2.2,3.4 M0.8,3.6 L2.6,3.8 L2.2,2" fill="none" stroke="#2f6fb7" stroke-width="0.6"/></svg>
<svg style="left:892.5px;top:60px" width="3" height="2" viewBox="0 0 3 2"><path d="M0,0 L3,0 L1.5,1.8Z" fill="#666"/></svg>
<svg style="left:843px;top:69.5px" width="7" height="9" viewBox="0 0 7 9"><path d="M1,0.5 L1,7.5 L2.8,5.8 L4.2,8.6 L5.2,8.1 L3.9,5.4 L6.2,5.3Z" fill="#fff" stroke="#666" stroke-width="0.6"/></svg>
<svg style="left:889.5px;top:74.3px" width="3" height="2" viewBox="0 0 3 2"><path d="M0,0 L3,0 L1.5,1.8Z" fill="#666"/></svg>
<div class="a" style="left:900px;top:41px;width:1px;height:51px;background:#dcdcdc;"></div>
<svg style="left:988px;top:87.5px" width="6" height="4" viewBox="0 0 6 4"><path d="M0.5,3.3 L3,0.8 L5.5,3.3" fill="none" stroke="#666" stroke-width="0.9"/></svg>
<svg style="left:13px;top:5.8px" width="8.8" height="8.4" viewBox="0 0 10 10" preserveAspectRatio="none"><path d="M0.5,0.5 H9.5 V9.5 H0.5Z" fill="none" stroke="#fff" stroke-width="1.1"/><rect x="2.5" y="0.5" width="5" height="3.4" fill="#fff"/><rect x="2.6" y="6" width="4.8" height="3.5" fill="#fff"/></svg>
<svg style="left:40px;top:6px" width="10" height="8" viewBox="0 0 10 8"><path d="M3.5,0.8 L0.8,3.4 L3.5,6 M0.8,3.4 H6.4 C9.6,3.4 9.6,7.4 6.4,7.4" fill="none" stroke="#dca394" stroke-width="1"/></svg>
<svg style="left:54.8px;top:9.5px" width="3" height="2" viewBox="0 0 3 2"><path d="M0,0 L3,0 L1.5,1.8Z" fill="#dca394"/></svg>
<svg style="left:71px;top:5.5px" width="9" height="9" viewBox="0 0 9 9"><path d="M7.6,3 A3.5,3.5 0 1 0 8,5.6" fill="none" stroke="#dca394" stroke-width="1"/><path d="M8.6,0.6 L8.4,3.6 L5.6,3Z" fill="#dca394"/></svg>
<svg style="left:99px;top:5px" width="11" height="10" viewBox="0 0 11 10"><path d="M0,0.5 H11" stroke="#fff" stroke-width="1"/><rect x="1.2" y="1" width="8.6" height="5.4" fill="none" stroke="#fff" stroke-width="0.9"/><path d="M5.5,6.5 V8 M3,9.6 L5.5,7.6 L8,9.6" stroke="#fff" stroke-width="0.8" fill="none"/><circle cx="6.4" cy="5.4" r="1.8" fill="#b7472a" stroke="#fff" stroke-width="0.7"/></svg>
<svg style="left:133px;top:8px" width="3" height="4" viewBox="0 0 3 4"><path d="M0,0.4 H3" stroke="#fff" stroke-width="0.7"/><path d="M0,1.8 L3,1.8 L1.5,3.6Z" fill="#fff"/></svg>
<svg style="left:891px;top:6.5px" width="9" height="8" viewBox="0 0 9 8"><rect x="0.5" y="0.5" width="8" height="6.5" fill="none" stroke="#fff" stroke-width="0.9"/><path d="M4.5,5.6 V2.4 M3,3.8 L4.5,2.2 L6,3.8" stroke="#fff" stroke-width="0.8" fill="none"/></svg>
<div class="a" style="left:922.5px;top:11.5px;width:6.5px;height:1px;background:#fff;"></div>
<svg style="left:952px;top:6.5px" width="8" height="8" viewBox="0 0 8 8"><rect x="0.5" y="2" width="5" height="5" fill="none" stroke="#fff" stroke-width="0.8"/><path d="M2,2 V0.5 H7.2 V5.6 H5.6" fill="none" stroke="#fff" stroke-width="0.8"/></svg>
<svg style="left:981px;top:7.5px" width="7" height="7" viewBox="0 0 7 7"><path d="M0.5,0.5 L6.5,6.5 M6.5,0.5 L0.5,6.5" stroke="#fff" stroke-width="1"/></svg>
<svg style="left:479.5px;top:24.5px" width="6" height="9" viewBox="0 0 6 9"><path d="M3,0.5 C0.2,0.5 0,3.4 1.8,5 V6.4 H4.2 V5 C6,3.4 5.8,0.5 3,0.5Z M2,7.6 H4" fill="none" stroke="#f3cfc5" stroke-width="0.7"/></svg>
<svg style="left:924px;top:24px" width="9" height="10" viewBox="0 0 9 10"><circle cx="4" cy="3" r="2.4" fill="none" stroke="#fff" stroke-width="0.9"/><path d="M0.5,9.5 C0.5,5.5 7.5,5.5 7.5,9.5" fill="none" stroke="#fff" stroke-width="0.9"/><path d="M6.4,7.6 H9 M7.7,6.3 V8.9" stroke="#fff" stroke-width="0.7"/></svg>
<div class="a" style="left:989.5px;top:96px;width:10px;height:403px;background:#dcdcdc;"></div>
<div class="a" style="left:989.5px;top:97px;width:9.7px;height:9px;background:#fff;border:1px solid #cfcfcf;"></div>
<svg style="left:992px;top:100px" width="5" height="3" viewBox="0 0 5 3"><path d="M0,3 L2.5,0.3 L5,3Z" fill="#666"/></svg>
<div class="a" style="left:989.5px;top:106.5px;width:9.7px;height:12.5px;background:#fff;border:1px solid #cfcfcf;"></div>
<div class="a" style="left:989.5px;top:463px;width:10px;height:36px;background:#e6e6e6;"></div>
<div class="a" style="left:989.5px;top:453.3px;width:9.7px;height:9.7px;background:#fff;border:1px solid #cfcfcf;"></div>
<svg style="left:992px;top:457px" width="5" height="3" viewBox="0 0 5 3"><path d="M0,0 L2.5,2.7 L5,0Z" fill="#555"/></svg>
<svg style="left:992px;top:466.5px" width="5" height="6" viewBox="0 0 5 6"><path d="M0,2.6 L2.5,0 L5,2.6Z M0,5 L2.5,2.6 L5,5Z" fill="#555"/><path d="M0,5.7 H5" stroke="#555" stroke-width="0.6"/></svg>
<svg style="left:992px;top:477.5px" width="5" height="6" viewBox="0 0 5 6"><path d="M0,0.3 H5" stroke="#555" stroke-width="0.6"/><path d="M0,1 L2.5,3.6 L5,1Z M0,3.4 L2.5,6 L5,3.4Z" fill="#555"/></svg>
<svg style="left:44.5px;top:100.2px" width="5" height="3" viewBox="0 0 5 3"><path d="M0,3 L2.5,0.3 L5,3Z" fill="#666"/></svg>
<svg style="left:44.6px;top:515.6px" width="5" height="3" viewBox="0 0 5 3"><path d="M0,0 L2.5,2.7 L5,0Z" fill="#555"/></svg>
<svg style="left:685px;top:526px" width="8" height="8" viewBox="0 0 8 8"><path d="M0,6.8 H8 M0,4.6 H8 M1.6,2.6 H6.4" stroke="#666" stroke-width="0.8"/><path d="M2.6,1.6 L4,0 L5.4,1.6Z" fill="#666"/></svg>
<svg style="left:731px;top:525.5px" width="9" height="8" viewBox="0 0 9 8"><path d="M0.3,0.3 H8.6 V5.4 H4.4 L2.6,7.6 V5.4 H0.3Z" fill="#6a6a6a"/></svg>
<div class="a" style="left:791.8px;top:523.3px;width:20.4px;height:14px;background:#c8c8c8;"></div>
<svg style="left:798px;top:526px" width="9" height="8" viewBox="0 0 9 8"><rect x="0.4" y="0.4" width="8" height="7" fill="none" stroke="#555" stroke-width="0.8"/><path d="M2.8,0.4 V7.4 M2.8,5 H8.4" stroke="#555" stroke-width="0.7"/></svg>
<svg style="left:818.5px;top:526px" width="9" height="8" viewBox="0 0 9 8"><rect x="0.4" y="0.4" width="3.2" height="2.6" fill="none" stroke="#666" stroke-width="0.7"/><rect x="5" y="0.4" width="3.2" height="2.6" fill="none" stroke="#666" stroke-width="0.7"/><rect x="0.4" y="4.6" width="3.2" height="2.6" fill="none" stroke="#666" stroke-width="0.7"/><rect x="5" y="4.6" width="3.2" height="2.6" fill="none" stroke="#666" stroke-width="0.7"/></svg>
<svg style="left:839px;top:526px" width="9" height="8" viewBox="0 0 9 8"><path d="M0.4,0.8 H3.8 L4.5,1.5 L5.2,0.8 H8.6 V6.6 H5.2 L4.5,7.3 L3.8,6.6 H0.4Z" fill="#bbb" stroke="#666" stroke-width="0.7"/><path d="M4.5,1.5 V7" stroke="#666" stroke-width="0.6"/></svg>
<svg style="left:860.5px;top:525.5px" width="9" height="9" viewBox="0 0 9 9"><path d="M0,0.6 H9" stroke="#666" stroke-width="0.9"/><rect x="1" y="1" width="7" height="4.4" fill="none" stroke="#666" stroke-width="0.7"/><path d="M4.5,5.4 V7 M2.6,8.6 L4.5,6.8 L6.4,8.6" stroke="#666" stroke-width="0.7" fill="none"/></svg>
<div class="a" style="left:878.8px;top:529.3px;width:4.6px;height:1px;background:#444;"></div>
<div class="a" style="left:886px;top:529.4px;width:64px;height:0.8px;background:#9a9a9a;"></div>
<div class="a" style="left:911.8px;top:525.5px;width:1.8px;height:8.4px;background:#555;"></div>
<div class="a" style="left:953.6px;top:529.3px;width:5.4px;height:1px;background:#444;"></div>
<div class="a" style="left:955.8px;top:527.1px;width:1px;height:5.4px;background:#444;"></div>
<svg style="left:987.5px;top:525.5px" width="9" height="9" viewBox="0 0 9 9"><rect x="0.5" y="0.5" width="8" height="8" rx="1" fill="none" stroke="#666" stroke-width="0.8"/><path d="M4.5,0.5 V3 M4.5,6 V8.5 M0.5,4.5 H3 M6,4.5 H8.5" stroke="#666" stroke-width="0.7"/></svg>
<svg style="left:57px;top:524.5px" width="9" height="9" viewBox="0 0 9 9"><path d="M0.5,0.8 H3.2 L4,1.6 V8 L3.2,7.2 H0.5Z M7.5,3.4 V7.2 H4.8 L4,8" fill="none" stroke="#666" stroke-width="0.7"/><path d="M4.6,4.6 L5.6,5.8 L8.2,1.4" fill="none" stroke="#666" stroke-width="0.8"/></svg>
<svg style="left:10px;top:544.6px" width="11.4" height="10.4" viewBox="0 0 11.4 10.4"><path d="M0,1.5 L4.8,0.8 V5 H0Z M5.5,0.7 L11.4,0 V5 H5.5Z M0,5.6 H4.8 V9.7 L0,9Z M5.5,5.6 H11.4 V10.4 L5.5,9.7Z" fill="#fff"/></svg>
<svg style="left:41.5px;top:543px" width="15" height="13" viewBox="0 0 15 13"><path d="M0.5,1.2 H5.2 L6.4,2.6 H14.5 V11 H0.5Z" fill="#e9b93f"/><rect x="0.5" y="3.4" width="14" height="7.8" fill="#fbd665"/><path d="M3.2,12.6 V7.4 H11.8 V12.6 H9.6 V9.6 H5.4 V12.6Z" fill="#3c9de6"/></svg>
<svg style="left:74px;top:543px" width="15" height="14" viewBox="0 0 15 14"><path d="M1,13.2 L2,9.8 A6.2,6.2 0 1 1 4.4,12.2Z" fill="#fff"/><circle cx="7.6" cy="6.6" r="5.2" fill="#2cb742"/><path d="M5.4,4 C4.6,5.4 6.6,8.8 9.2,9.4 C10,9.4 10.6,8.8 10.4,8.2 L9.2,7.6 L8.6,8.2 C7.8,8 6.8,7 6.6,6.2 L7.2,5.6 L6.6,4.2 C6.2,3.8 5.8,3.8 5.4,4Z" fill="#fff"/></svg>
<svg style="left:106px;top:543px" width="15" height="14" viewBox="0 0 15 14"><defs><linearGradient id="cg" x1="0" y1="0.2" x2="1" y2="0.8"><stop offset="0" stop-color="#00c4cc"/><stop offset="0.5" stop-color="#3b6fe8"/><stop offset="1" stop-color="#7d2ae8"/></linearGradient></defs><circle cx="7.4" cy="6.8" r="6.6" fill="url(#cg)"/><text x="3.4" y="10.6" font-family="'Liberation Serif',serif" font-style="italic" font-size="11" fill="#fff">C</text></svg>
<svg style="left:137.8px;top:541.8px" width="16.4" height="16" viewBox="0 0 16.4 16"><rect width="16.4" height="16" fill="#efd9d3"/><text x="2.2" y="13.6" font-family="'Liberation Sans',sans-serif" font-weight="bold" font-size="15.5" fill="#c8202d">A</text></svg>
<svg style="left:170px;top:541.8px" width="16.4" height="16" viewBox="0 0 16.4 16"><rect width="16.4" height="16" fill="#d6ebe9"/><rect y="11" width="16.4" height="5" fill="#a9d6d2"/><text x="4.2" y="11.8" font-family="'Liberation Sans',sans-serif" font-weight="bold" font-size="12.5" fill="#0e8f8a">3</text></svg>
<svg style="left:203.4px;top:542.4px" width="14.6" height="13.8" viewBox="0 0 14.6 13.8"><rect width="14.6" height="13.8" rx="2" fill="#0a2a4a"/><text x="2.4" y="10.2" font-family="'Liberation Sans',sans-serif" font-weight="bold" font-size="8.2" fill="#31a8ff">Ps</text></svg>
<svg style="left:234.8px;top:542.4px" width="15.2" height="13.8" viewBox="0 0 15.2 13.8"><rect x="0.6" y="0.6" width="14" height="12.6" fill="#2a1200" stroke="#e8820c" stroke-width="1.1"/><text x="3.6" y="10.2" font-family="'Liberation Sans',sans-serif" font-weight="bold" font-size="8.4" fill="#ff9a00">Ai</text></svg>
<svg style="left:267px;top:542.2px" width="16" height="15" viewBox="0 0 16 15"><circle cx="8" cy="7.4" r="7.3" fill="#fff"/><path d="M4.4,3 L8,8 L11.6,3 M8,8 V12.6" fill="none" stroke="#e8202a" stroke-width="1.7"/></svg>
<div class="a" style="left:262px;top:561.3px;width:26.4px;height:1.7px;background:#76b9ed;"></div>
<div class="a" style="left:292.3px;top:537.3px;width:31.3px;height:25.7px;background:#3e3e3e;"></div>
<div class="a" style="left:292.3px;top:561.3px;width:31.3px;height:1.7px;background:#76b9ed;"></div>
<svg style="left:299.8px;top:542.6px" width="16" height="14" viewBox="0 0 16 14"><rect x="6.5" y="1.2" width="9" height="11.6" fill="#fff"/><path d="M8.6,4 H14 M8.6,6.4 H14 M8.6,8.8 H14" stroke="#d24726" stroke-width="1.1"/><path d="M0,1.4 L9,0 V14 L0,12.6Z" fill="#d24726"/><text x="2.3" y="10.2" font-family="'Liberation Sans',sans-serif" font-weight="bold" font-size="8.4" fill="#fff">P</text></svg>
<svg style="left:871.5px;top:547.5px" width="7" height="5" viewBox="0 0 7 5"><path d="M0.5,4.2 L3.5,1 L6.5,4.2" fill="none" stroke="#fff" stroke-width="0.9"/></svg>
<svg style="left:883.8px;top:546.5px" width="12" height="8" viewBox="0 0 12 8"><rect x="2.6" y="1.4" width="8.8" height="5" fill="#fff"/><rect x="11.4" y="2.8" width="0.8" height="2.2" fill="#fff"/><path d="M0.4,0.4 H2.6 V3.4 M1.5,3.4 V6.2 H3" stroke="#fff" stroke-width="0.8" fill="none"/></svg>
<svg style="left:901.3px;top:545.8px" width="10" height="9" viewBox="0 0 10 9"><path d="M0.6,8.6 A8,8 0 0 1 8.8,0.6 M3,8.6 A5.6,5.6 0 0 1 8.8,3 M5.4,8.6 A3.2,3.2 0 0 1 8.8,5.4" fill="none" stroke="#aaa" stroke-width="0.8"/><circle cx="8.2" cy="8" r="1" fill="#fff"/></svg>
<svg style="left:915px;top:545.8px" width="12" height="9" viewBox="0 0 12 9"><path d="M0.5,3 H2.4 L5,0.8 V8.2 L2.4,6 H0.5Z" fill="none" stroke="#fff" stroke-width="0.8"/><path d="M6.6,3 Q7.6,4.5 6.6,6 M8.2,1.8 Q10,4.5 8.2,7.2 M9.8,0.8 Q12.2,4.5 9.8,8.2" fill="none" stroke="#ddd" stroke-width="0.7"/></svg>
<span class="t" id="t0" style="left:435px;top:5.50px;height:11px;line-height:11px;font-size:8.2px;color:#fff;font-weight:normal;font-family:'Liberation Sans', sans-serif;transform:scaleX(0.9427);">Дизайн в жилой среде. - PowerPoint</span>
<span class="t" id="t1" style="left:9.5px;top:23.80px;height:11px;line-height:11px;font-size:8.2px;color:#fff;font-weight:normal;font-family:'Liberation Sans', sans-serif;transform:scaleX(0.9185);">Файл</span>
<span class="t" id="t2" style="left:47px;top:23.80px;height:11px;line-height:11px;font-size:8.2px;color:#b7472a;font-weight:normal;font-family:'Liberation Sans', sans-serif;transform:scaleX(0.9239);">Главная</span>
<span class="t" id="t3" style="left:91px;top:23.80px;height:11px;line-height:11px;font-size:8.2px;color:#fff;font-weight:normal;font-family:'Liberation Sans', sans-serif;transform:scaleX(0.9711);">Меню</span>
<span class="t" id="t4" style="left:128px;top:23.80px;height:11px;line-height:11px;font-size:8.2px;color:#fff;font-weight:normal;font-family:'Liberation Sans', sans-serif;transform:scaleX(0.8871);">Вставка</span>
<span class="t" id="t5" style="left:170.8px;top:23.80px;height:11px;line-height:11px;font-size:8.2px;color:#fff;font-weight:normal;font-family:'Liberation Sans', sans-serif;transform:scaleX(0.9698);">Дизайн</span>
<span class="t" id="t6" style="left:212.5px;top:23.80px;height:11px;line-height:11px;font-size:8.2px;color:#fff;font-weight:normal;font-family:'Liberation Sans', sans-serif;transform:scaleX(0.9764);">Переходы</span>
<span class="t" id="t7" style="left:265px;top:23.80px;height:11px;line-height:11px;font-size:8.2px;color:#fff;font-weight:normal;font-family:'Liberation Sans', sans-serif;transform:scaleX(0.9886);">Анимация</span>
<span class="t" id="t8" style="left:318px;top:23.80px;height:11px;line-height:11px;font-size:8.2px;color:#fff;font-weight:normal;font-family:'Liberation Sans', sans-serif;transform:scaleX(0.9422);">Слайд-шоу</span>
<span class="t" id="t9" style="left:372.5px;top:23.80px;height:11px;line-height:11px;font-size:8.2px;color:#fff;font-weight:normal;font-family:'Liberation Sans', sans-serif;transform:scaleX(0.9726);">Рецензирование</span>
<span class="t" id="t10" style="left:449.5px;top:23.80px;height:11px;line-height:11px;font-size:8.2px;color:#fff;font-weight:normal;font-family:'Liberation Sans', sans-serif;transform:scaleX(0.9114);">Вид</span>
<span class="t" id="t11" style="left:489px;top:23.80px;height:11px;line-height:11px;font-size:8.2px;color:#efc6ba;font-weight:normal;font-family:'Liberation Sans', sans-serif;transform:scaleX(0.9280);">Что вы хотите сделать?</span>
<span class="t" id="t12" style="left:897.5px;top:23.80px;height:11px;line-height:11px;font-size:8.2px;color:#fff;font-weight:normal;font-family:'Liberation Sans', sans-serif;transform:scaleX(0.9174);">Вход</span>
<span class="t" id="t13" style="left:935px;top:23.80px;height:11px;line-height:11px;font-size:8.2px;color:#fff;font-weight:normal;font-family:'Liberation Sans', sans-serif;transform:scaleX(0.9452);">Общий доступ</span>
<span class="t" id="t14" style="left:344.5px;top:246.00px;height:48px;line-height:48px;font-size:37px;color:#1f1f1f;font-weight:normal;font-family:'Liberation Serif', serif;transform:scaleX(1.0489);-webkit-text-stroke:0.55px #fff;">ДИЗАЙН В ЖИЛОЙ</span>
<span class="t" id="t15" style="left:461px;top:286.00px;height:48px;line-height:48px;font-size:37px;color:#1f1f1f;font-weight:normal;font-family:'Liberation Serif', serif;transform:scaleX(0.9853);-webkit-text-stroke:0.55px #fff;">СРЕДЕ</span>
<span class="t" id="t16" style="left:656px;top:396.80px;height:13px;line-height:13px;font-size:10px;color:#303030;font-weight:normal;font-family:'Liberation Serif', serif;transform:scaleX(1.0063);letter-spacing:1.1px;">Подзаголовок слайда</span>
<span class="t" id="t17" style="left:8.0px;top:104.70px;height:13px;line-height:13px;font-size:9.9px;color:#e8552d;font-weight:normal;font-family:'Liberation Sans', sans-serif;transform:scaleX(0.9818);">1</span>
<span class="t" id="t18" style="left:8.0px;top:124.51px;height:13px;line-height:13px;font-size:9.9px;color:#5c5c5c;font-weight:normal;font-family:'Liberation Sans', sans-serif;transform:scaleX(0.9818);">2</span>
<span class="t" id="t19" style="left:8.0px;top:144.33px;height:13px;line-height:13px;font-size:9.9px;color:#5c5c5c;font-weight:normal;font-family:'Liberation Sans', sans-serif;transform:scaleX(0.9818);">3</span>
<span class="t" id="t20" style="left:8.0px;top:164.15px;height:13px;line-height:13px;font-size:9.9px;color:#5c5c5c;font-weight:normal;font-family:'Liberation Sans', sans-serif;transform:scaleX(0.9818);">4</span>
<span class="t" id="t21" style="left:8.0px;top:183.96px;height:13px;line-height:13px;font-size:9.9px;color:#5c5c5c;font-weight:normal;font-family:'Liberation Sans', sans-serif;transform:scaleX(0.9818);">5</span>
<span class="t" id="t22" style="left:8.0px;top:203.78px;height:13px;line-height:13px;font-size:9.9px;color:#5c5c5c;font-weight:normal;font-family:'Liberation Sans', sans-serif;transform:scaleX(0.9818);">6</span>
<span class="t" id="t23" style="left:8.0px;top:223.59px;height:13px;line-height:13px;font-size:9.9px;color:#5c5c5c;font-weight:normal;font-family:'Liberation Sans', sans-serif;transform:scaleX(0.9818);">7</span>
<span class="t" id="t24" style="left:8.0px;top:243.41px;height:13px;line-height:13px;font-size:9.9px;color:#5c5c5c;font-weight:normal;font-family:'Liberation Sans', sans-serif;transform:scaleX(0.9818);">8</span>
<span class="t" id="t25" style="left:8.0px;top:263.22px;height:13px;line-height:13px;font-size:9.9px;color:#5c5c5c;font-weight:normal;font-family:'Liberation Sans', sans-serif;transform:scaleX(0.9818);">9</span>
<span class="t" id="t26" style="left:2.5999999999999996px;top:283.04px;height:13px;line-height:13px;font-size:9.9px;color:#5c5c5c;font-weight:normal;font-family:'Liberation Sans', sans-serif;transform:scaleX(0.9832);">10</span>
<span class="t" id="t27" style="left:2.5999999999999996px;top:302.85px;height:13px;line-height:13px;font-size:9.9px;color:#5c5c5c;font-weight:normal;font-family:'Liberation Sans', sans-serif;transform:scaleX(1.0537);">11</span>
<span class="t" id="t28" style="left:2.5999999999999996px;top:322.67px;height:13px;line-height:13px;font-size:9.9px;color:#5c5c5c;font-weight:normal;font-family:'Liberation Sans', sans-serif;transform:scaleX(0.9832);">12</span>
<span class="t" id="t29" style="left:2.5999999999999996px;top:342.48px;height:13px;line-height:13px;font-size:9.9px;color:#5c5c5c;font-weight:normal;font-family:'Liberation Sans', sans-serif;transform:scaleX(0.9832);">13</span>
<span class="t" id="t30" style="left:2.5999999999999996px;top:362.30px;height:13px;line-height:13px;font-size:9.9px;color:#5c5c5c;font-weight:normal;font-family:'Liberation Sans', sans-serif;transform:scaleX(0.9832);">14</span>
<span class="t" id="t31" style="left:2.5999999999999996px;top:382.11px;height:13px;line-height:13px;font-size:9.9px;color:#5c5c5c;font-weight:normal;font-family:'Liberation Sans', sans-serif;transform:scaleX(0.9832);">15</span>
<span class="t" id="t32" style="left:2.5999999999999996px;top:401.93px;height:13px;line-height:13px;font-size:9.9px;color:#5c5c5c;font-weight:normal;font-family:'Liberation Sans', sans-serif;transform:scaleX(0.9832);">16</span>
<span class="t" id="t33" style="left:2.5999999999999996px;top:421.74px;height:13px;line-height:13px;font-size:9.9px;color:#5c5c5c;font-weight:normal;font-family:'Liberation Sans', sans-serif;transform:scaleX(0.9832);">17</span>
<span class="t" id="t34" style="left:2.5999999999999996px;top:441.56px;height:13px;line-height:13px;font-size:9.9px;color:#5c5c5c;font-weight:normal;font-family:'Liberation Sans', sans-serif;transform:scaleX(0.9832);">18</span>
<span class="t" id="t35" style="left:2.5999999999999996px;top:461.37px;height:13px;line-height:13px;font-size:9.9px;color:#5c5c5c;font-weight:normal;font-family:'Liberation Sans', sans-serif;transform:scaleX(0.9832);">19</span>
<span class="t" id="t36" style="left:2.5999999999999996px;top:481.19px;height:13px;line-height:13px;font-size:9.9px;color:#5c5c5c;font-weight:normal;font-family:'Liberation Sans', sans-serif;transform:scaleX(0.9832);">20</span>
<span class="t" id="t37" style="left:2.5999999999999996px;top:501.00px;height:13px;line-height:13px;font-size:9.9px;color:#5c5c5c;font-weight:normal;font-family:'Liberation Sans', sans-serif;transform:scaleX(0.9832);">21</span>
<span class="t" id="t38" style="left:62px;top:503.90px;height:12px;line-height:12px;font-size:9.2px;color:#555;font-weight:normal;font-family:'Liberation Sans', sans-serif;transform:scaleX(1.0145);">Заметки к слайду</span>
<span class="t" id="t39" style="left:4px;top:525.30px;height:9px;line-height:9px;font-size:7.2px;color:#555;font-weight:normal;font-family:'Liberation Sans', sans-serif;transform:scaleX(0.8957);">Слайд 1 из 27</span>
<span class="t" id="t40" style="left:75px;top:525.30px;height:9px;line-height:9px;font-size:7.2px;color:#555;font-weight:normal;font-family:'Liberation Sans', sans-serif;transform:scaleX(0.9303);">русский</span>
<span class="t" id="t41" style="left:3px;top:62.30px;height:11px;line-height:11px;font-size:8.2px;color:#444;font-weight:normal;font-family:'Liberation Sans', sans-serif;transform:scaleX(0.9073);">Вставить</span>
<span class="t" id="t42" style="left:50px;top:41.00px;height:11px;line-height:11px;font-size:8.2px;color:#a9a9a9;font-weight:normal;font-family:'Liberation Sans', sans-serif;transform:scaleX(0.9335);">Вырезать</span>
<span class="t" id="t43" style="left:50px;top:55.30px;height:11px;line-height:11px;font-size:8.2px;color:#a9a9a9;font-weight:normal;font-family:'Liberation Sans', sans-serif;transform:scaleX(0.9979);">Копировать</span>
<span class="t" id="t44" style="left:50px;top:69.50px;height:11px;line-height:11px;font-size:8.2px;color:#a9a9a9;font-weight:normal;font-family:'Liberation Sans', sans-serif;transform:scaleX(0.9806);">Формат по образцу</span>
<span class="t" id="t45" style="left:35.8px;top:85.00px;height:9px;line-height:9px;font-size:7.2px;color:#666;font-weight:normal;font-family:'Liberation Sans', sans-serif;transform:scaleX(0.9254);">Буфер обмена</span>
<span class="t" id="t46" style="left:131px;top:62.00px;height:11px;line-height:11px;font-size:8.2px;color:#444;font-weight:normal;font-family:'Liberation Sans', sans-serif;transform:scaleX(0.9317);">Создать</span>
<span class="t" id="t47" style="left:133px;top:72.50px;height:11px;line-height:11px;font-size:8.2px;color:#444;font-weight:normal;font-family:'Liberation Sans', sans-serif;transform:scaleX(0.8779);">слайд</span>
<span class="t" id="t48" style="left:175px;top:40.70px;height:11px;line-height:11px;font-size:8.2px;color:#444;font-weight:normal;font-family:'Liberation Sans', sans-serif;transform:scaleX(0.9494);">Макет</span>
<span class="t" id="t49" style="left:175px;top:55.30px;height:11px;line-height:11px;font-size:8.2px;color:#444;font-weight:normal;font-family:'Liberation Sans', sans-serif;transform:scaleX(0.9339);">Сбросить</span>
<span class="t" id="t50" style="left:175px;top:69.50px;height:11px;line-height:11px;font-size:8.2px;color:#444;font-weight:normal;font-family:'Liberation Sans', sans-serif;transform:scaleX(0.8868);">Раздел</span>
<span class="t" id="t51" style="left:160px;top:85.00px;height:9px;line-height:9px;font-size:7.2px;color:#666;font-weight:normal;font-family:'Liberation Sans', sans-serif;transform:scaleX(0.8406);">Слайды</span>
<span class="t" id="t52" style="left:308.5px;top:45.50px;height:12px;line-height:12px;font-size:9.2px;color:#a9a9a9;font-weight:normal;font-family:'Liberation Sans', sans-serif;transform:scaleX(1.0585);">A</span>
<span class="t" id="t53" style="left:322px;top:47.00px;height:10px;line-height:10px;font-size:8px;color:#a9a9a9;font-weight:normal;font-family:'Liberation Sans', sans-serif;transform:scaleX(1.0292);">A</span>
<span class="t" id="t54" style="left:340px;top:45.50px;height:10px;line-height:10px;font-size:8px;color:#a9a9a9;font-weight:normal;font-family:'Liberation Sans', sans-serif;transform:scaleX(1.0292);">A</span>
<span class="t" id="t55" style="left:219.5px;top:64.80px;height:11px;line-height:11px;font-size:8.4px;color:#a9a9a9;font-weight:bold;font-family:'Liberation Sans', sans-serif;transform:scaleX(0.9237);">Ж</span>
<span class="t" id="t56" style="left:235px;top:64.80px;height:11px;line-height:11px;font-size:8.4px;color:#a9a9a9;font-weight:normal;font-family:'Liberation Sans', sans-serif;transform:scaleX(1.0127);font-style:italic;">К</span>
<span class="t" id="t57" style="left:249px;top:64.80px;height:11px;line-height:11px;font-size:8.4px;color:#a9a9a9;font-weight:normal;font-family:'Liberation Sans', sans-serif;transform:scaleX(0.8939);text-decoration:underline;">Ч</span>
<span class="t" id="t58" style="left:263px;top:64.80px;height:11px;line-height:11px;font-size:8.6px;color:#a9a9a9;font-weight:bold;font-family:'Liberation Sans', sans-serif;transform:scaleX(0.7847);">S</span>
<span class="t" id="t59" style="left:273px;top:66.00px;height:9px;line-height:9px;font-size:6.6px;color:#a9a9a9;font-weight:normal;font-family:'Liberation Sans', sans-serif;transform:scaleX(0.9868);text-decoration:line-through;">abc</span>
<span class="t" id="t60" style="left:288px;top:65.10px;height:9px;line-height:9px;font-size:7px;color:#a9a9a9;font-weight:normal;font-family:'Liberation Sans', sans-serif;transform:scaleX(1.0195);text-decoration:underline;">AV</span>
<span class="t" id="t61" style="left:307.5px;top:65.30px;height:10px;line-height:10px;font-size:8px;color:#a9a9a9;font-weight:normal;font-family:'Liberation Sans', sans-serif;transform:scaleX(0.9697);">Aa</span>
<span class="t" id="t62" style="left:333px;top:64.00px;height:12px;line-height:12px;font-size:9.6px;color:#a9a9a9;font-weight:normal;font-family:'Liberation Sans', sans-serif;transform:scaleX(1.0927);">A</span>
<span class="t" id="t63" style="left:268px;top:85.00px;height:9px;line-height:9px;font-size:7.2px;color:#666;font-weight:normal;font-family:'Liberation Sans', sans-serif;transform:scaleX(0.9089);">Шрифт</span>
<span class="t" id="t64" style="left:465.5px;top:41.00px;height:11px;line-height:11px;font-size:8.2px;color:#a9a9a9;font-weight:normal;font-family:'Liberation Sans', sans-serif;transform:scaleX(0.9340);">Направление текста</span>
<span class="t" id="t65" style="left:465.5px;top:55.30px;height:11px;line-height:11px;font-size:8.2px;color:#a9a9a9;font-weight:normal;font-family:'Liberation Sans', sans-serif;transform:scaleX(0.9329);">Выровнять текст</span>
<span class="t" id="t66" style="left:465.5px;top:69.50px;height:11px;line-height:11px;font-size:8.2px;color:#a9a9a9;font-weight:normal;font-family:'Liberation Sans', sans-serif;transform:scaleX(0.9586);">Преобразовать в SmartArt</span>
<span class="t" id="t67" style="left:448px;top:85.00px;height:9px;line-height:9px;font-size:7.2px;color:#666;font-weight:normal;font-family:'Liberation Sans', sans-serif;transform:scaleX(0.8923);">Абзац</span>
<span class="t" id="t68" style="left:663.7px;top:62.00px;height:11px;line-height:11px;font-size:8.2px;color:#444;font-weight:normal;font-family:'Liberation Sans', sans-serif;transform:scaleX(0.9644);">Упорядочить</span>
<span class="t" id="t69" style="left:713.7px;top:62.00px;height:11px;line-height:11px;font-size:8.2px;color:#a9a9a9;font-weight:normal;font-family:'Liberation Sans', sans-serif;transform:scaleX(0.9525);">Экспресс-</span>
<span class="t" id="t70" style="left:720px;top:72.50px;height:11px;line-height:11px;font-size:8.2px;color:#a9a9a9;font-weight:normal;font-family:'Liberation Sans', sans-serif;transform:scaleX(0.8723);">стили</span>
<span class="t" id="t71" style="left:764.5px;top:40.80px;height:11px;line-height:11px;font-size:8.2px;color:#a9a9a9;font-weight:normal;font-family:'Liberation Sans', sans-serif;transform:scaleX(0.9275);">Заливка фигуры</span>
<span class="t" id="t72" style="left:764.5px;top:55.10px;height:11px;line-height:11px;font-size:8.2px;color:#a9a9a9;font-weight:normal;font-family:'Liberation Sans', sans-serif;transform:scaleX(0.9465);">Контур фигуры</span>
<span class="t" id="t73" style="left:764.5px;top:69.10px;height:11px;line-height:11px;font-size:8.2px;color:#a9a9a9;font-weight:normal;font-family:'Liberation Sans', sans-serif;transform:scaleX(0.8866);">Эффекты фигуры</span>
<span class="t" id="t74" style="left:682.5px;top:85.00px;height:9px;line-height:9px;font-size:7.2px;color:#666;font-weight:normal;font-family:'Liberation Sans', sans-serif;transform:scaleX(0.9115);">Рисование</span>
<span class="t" id="t75" style="left:853px;top:40.80px;height:11px;line-height:11px;font-size:8.2px;color:#444;font-weight:normal;font-family:'Liberation Sans', sans-serif;transform:scaleX(0.9198);">Найти</span>
<span class="t" id="t76" style="left:841px;top:54.60px;height:6px;line-height:6px;font-size:5px;color:#6a3fa0;font-weight:normal;font-family:'Liberation Sans', sans-serif;transform:scaleX(1.0787);">ab</span>
<span class="t" id="t77" style="left:845px;top:59.60px;height:6px;line-height:6px;font-size:5px;color:#2f6fb7;font-weight:normal;font-family:'Liberation Sans', sans-serif;transform:scaleX(1.1361);">ac</span>
<span class="t" id="t78" style="left:853px;top:55.10px;height:11px;line-height:11px;font-size:8.2px;color:#444;font-weight:normal;font-family:'Liberation Sans', sans-serif;transform:scaleX(0.9240);">Заменить</span>
<span class="t" id="t79" style="left:853px;top:69.10px;height:11px;line-height:11px;font-size:8.2px;color:#444;font-weight:normal;font-family:'Liberation Sans', sans-serif;transform:scaleX(0.8999);">Выделить</span>
<span class="t" id="t80" style="left:843px;top:85.00px;height:9px;line-height:9px;font-size:7.2px;color:#666;font-weight:normal;font-family:'Liberation Sans', sans-serif;transform:scaleX(0.9312);">Редактирование</span>
<span class="t" id="t81" style="left:694.8px;top:525.10px;height:9px;line-height:9px;font-size:7.2px;color:#444;font-weight:normal;font-family:'Liberation Sans', sans-serif;transform:scaleX(0.9164);">Заметки</span>
<span class="t" id="t82" style="left:741.7px;top:525.10px;height:9px;line-height:9px;font-size:7.2px;color:#444;font-weight:normal;font-family:'Liberation Sans', sans-serif;transform:scaleX(0.9349);">Примечания</span>
<span class="t" id="t83" style="left:966.8px;top:525.10px;height:9px;line-height:9px;font-size:7.2px;color:#444;font-weight:normal;font-family:'Liberation Sans', sans-serif;transform:scaleX(0.7870);">83 %</span>
<span class="t" id="t84" style="left:933.5px;top:545.80px;height:9px;line-height:9px;font-size:7.2px;color:#fff;font-weight:normal;font-family:'Liberation Sans', sans-serif;transform:scaleX(0.9232);">РУС</span>
<span class="t" id="t85" style="left:965.7px;top:539.30px;height:10px;line-height:10px;font-size:7.4px;color:#fff;font-weight:normal;font-family:'Liberation Sans', sans-serif;transform:scaleX(0.9081);">13:02</span>
<span class="t" id="t86" style="left:957px;top:550.90px;height:10px;line-height:10px;font-size:7.4px;color:#fff;font-weight:normal;font-family:'Liberation Sans', sans-serif;transform:scaleX(0.9270);">13.10.2021</span>
</body></html>
